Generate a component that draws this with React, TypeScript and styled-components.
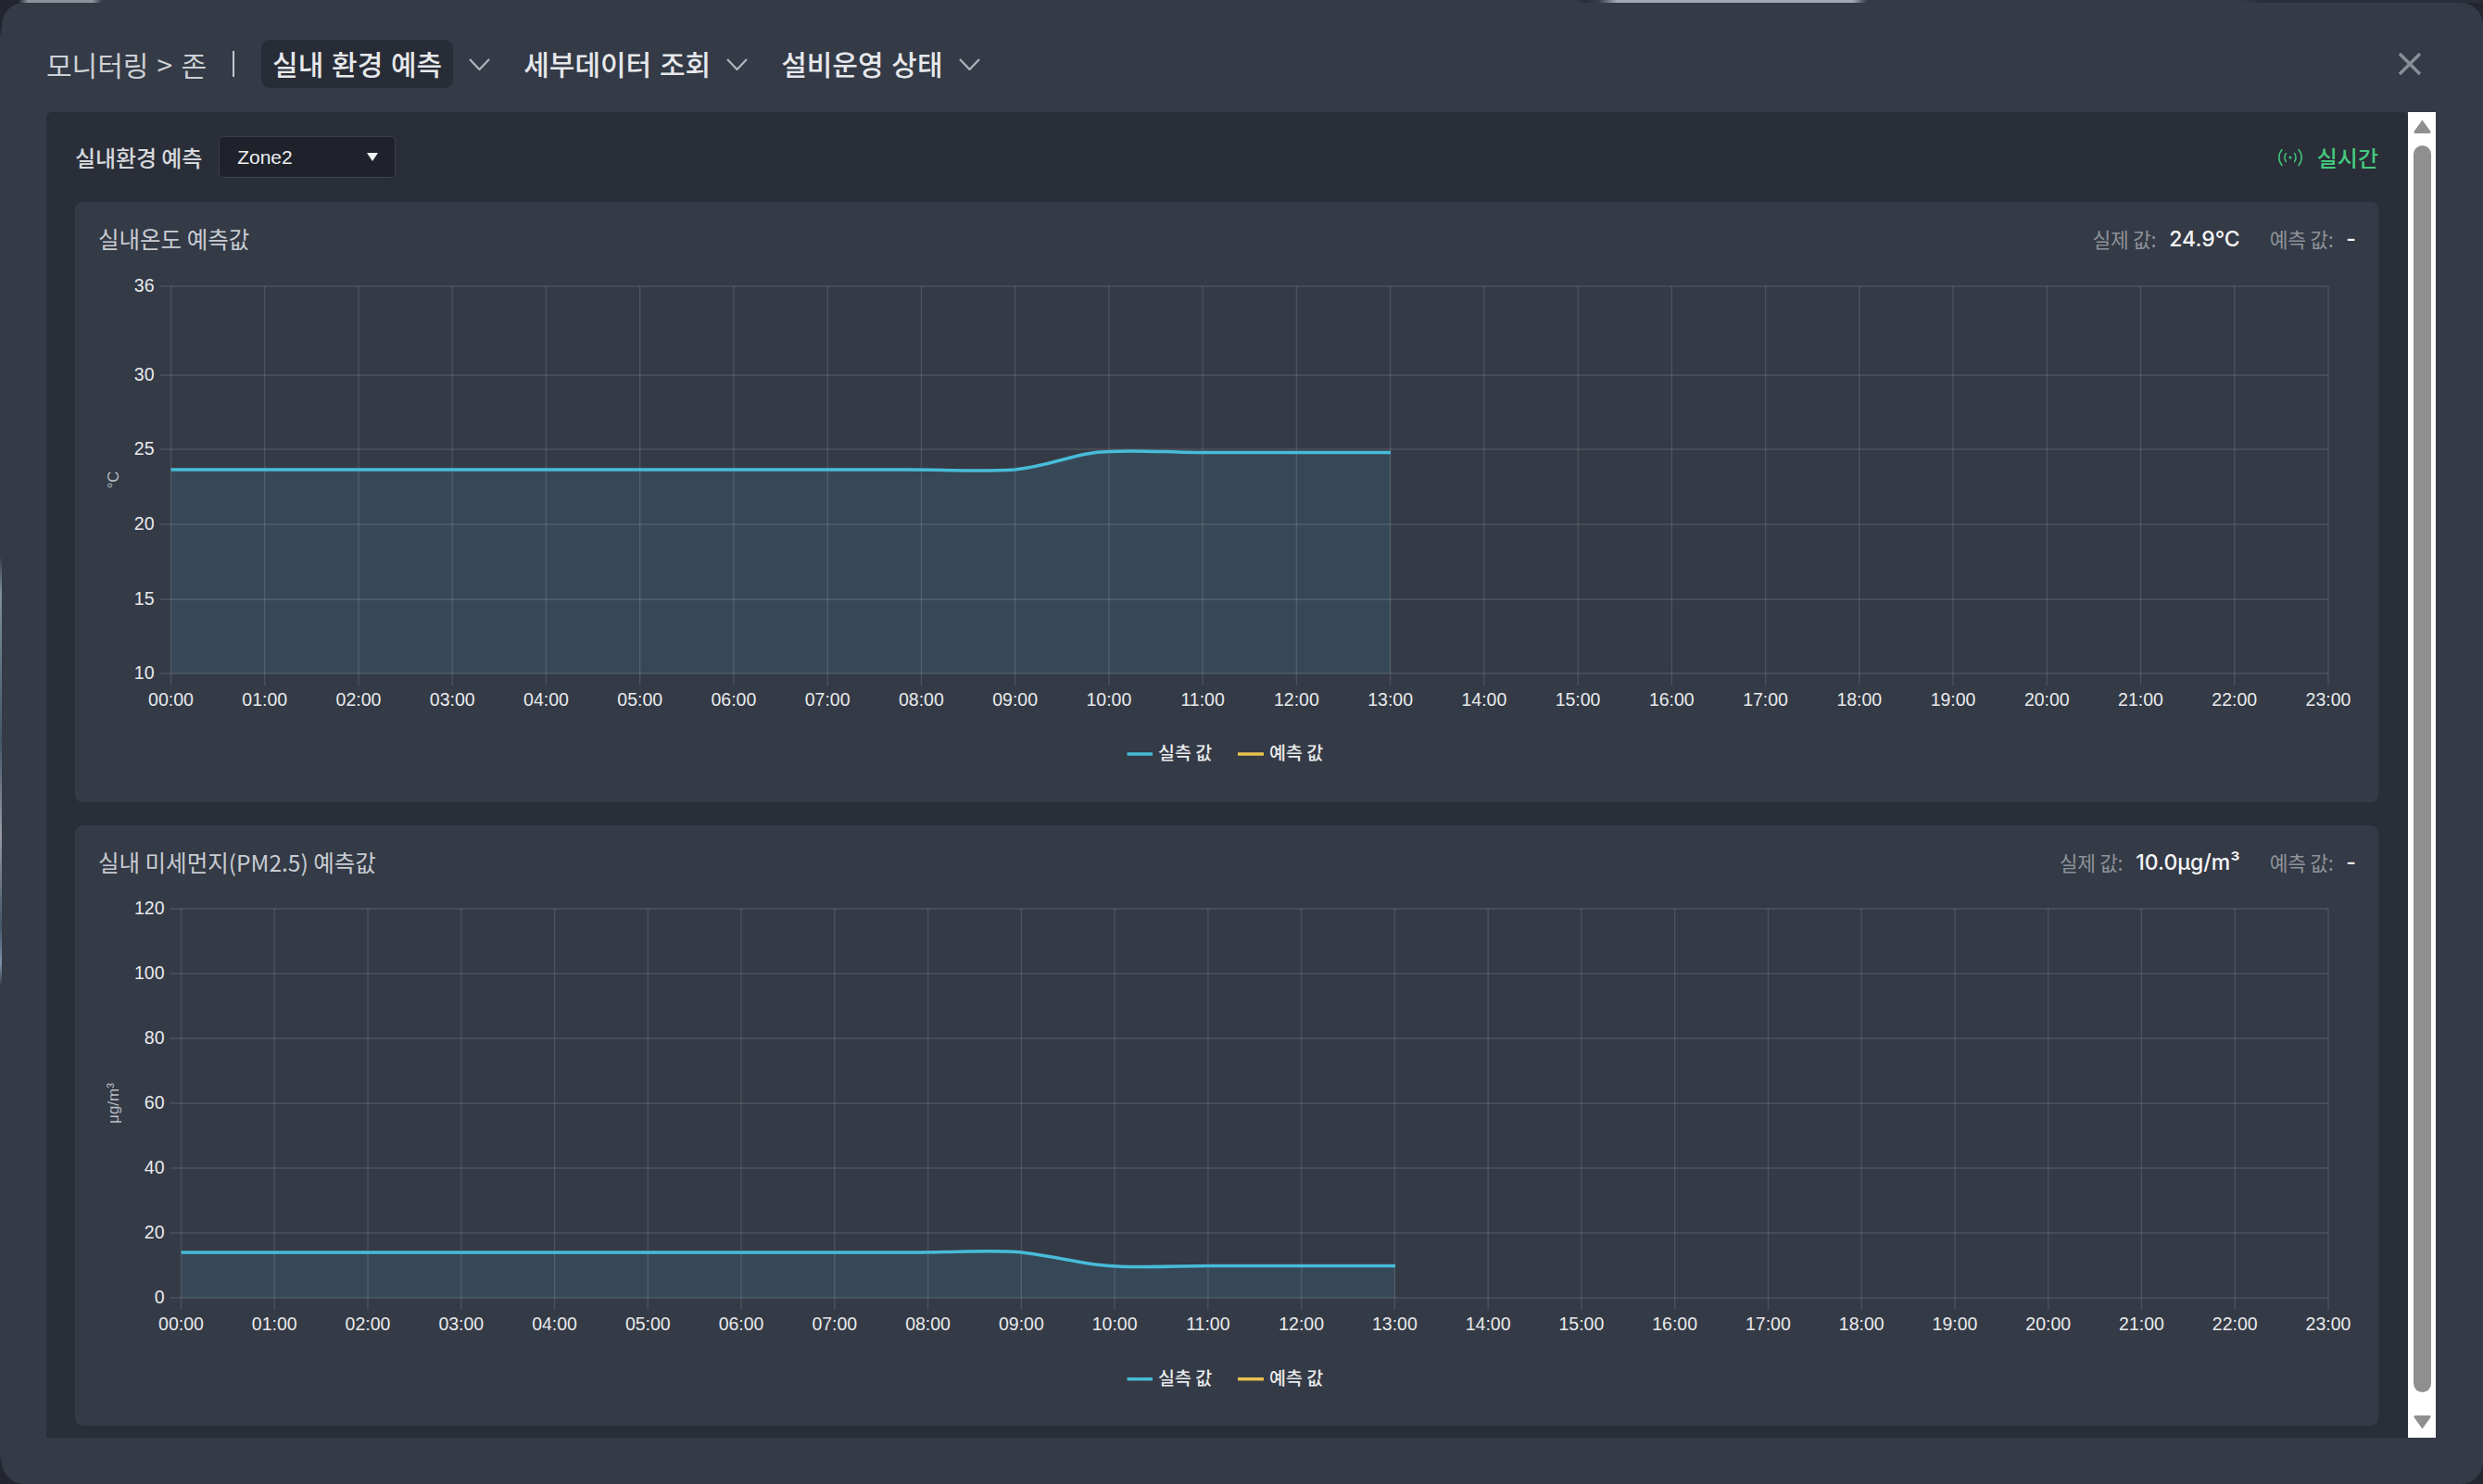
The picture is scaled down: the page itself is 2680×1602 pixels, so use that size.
import React, {FC} from 'react';
import styled, {createGlobalStyle} from 'styled-components';

const GlobalStyle = createGlobalStyle`
	html, body {
		margin: 0;
		padding: 0;
		background: #23262e;
	}
	* {
		box-sizing: border-box;
	}
`;

const FONT = `"Noto Sans CJK KR", "Liberation Sans", sans-serif`;
const LATIN = `"Liberation Sans", "Noto Sans CJK KR", sans-serif`;

// what shows of the blurred page behind the modal: a strip along the top and one along the left edge
const Page = styled.div`
	width: 2680px;
	height: 1602px;
	padding: 3px 0 0 2px;
	overflow: hidden;
	font-family: ${FONT};
	background:
		linear-gradient(
				90deg,
				#23262e 0 20px,
				#8d919a 30px 100px,
				#343a46 110px 1700px,
				#2a2e38 1710px,
				#343a46 1725px,
				#a4a8b2 1745px 2000px,
				#343a46 2015px 2420px,
				#2a2e38 2440px
			)
			top left / 100% 3px no-repeat,
		linear-gradient(
				180deg,
				#23262e 0 30px,
				#343a46 40px 600px,
				#7f909a 640px,
				#44576a 800px,
				#9a9aa2 900px,
				#44576a 1000px,
				#7d93a8 1040px,
				#343a46 1065px 1570px,
				#23262e 1580px
			)
			top left / 2px 100% no-repeat,
		#23262e;
`;

const Modal = styled.div`
	height: 1599px;
	background: #343a46;
	border-radius: 24px;
	padding: 0 51px 50px 48px;
	display: flex;
	flex-direction: column;
`;

const Header = styled.header`
	height: 118px;
	padding-top: 14px;
	display: flex;
	align-items: center;
`;

const Crumb = styled.span`
	font-size: 30px;
	word-spacing: 2.5px;
	color: #ccd0d5;
	white-space: nowrap;
`;

const Divider = styled.span`
	width: 2px;
	height: 28px;
	background: #c4c8ce;
	margin: 0 29px 0 28px;
`;

const Tab = styled.span<{$active?: boolean}>`
	font-size: 30px;
	font-weight: 500;
	word-spacing: 2px;
	color: #e6e8eb;
	height: 52px;
	line-height: 50px;
	padding: 0 ${({$active}) => ($active ? '12px' : '0')};
	border-radius: 9px;
	white-space: nowrap;
	background: ${({$active}) => ($active ? '#282c36' : 'transparent')};
`;

const Chevron = styled.svg`
	width: 23px;
	height: 13px;
	margin: 1px 36px 0 17px;
	fill: none;
	stroke: #b0b4bb;
	stroke-width: 2.2;
`;

const CloseButton = styled.svg`
	width: 26px;
	height: 26px;
	margin-left: auto;
	margin-right: 15px;
	fill: none;
	stroke: #8b8e96;
	stroke-width: 3.4;
`;

const Body = styled.div`
	flex: 1;
	display: flex;
	min-height: 0;
`;

const Panel = styled.main`
	flex: 1;
	background: #2a2e38;
	border-radius: 6px 6px 0 0;
	padding: 0 32px 13px 31px;
	display: flex;
	flex-direction: column;
`;

const PanelBar = styled.div`
	height: 97px;
	display: flex;
	align-items: center;
`;

const PanelTitle = styled.span`
	font-size: 24px;
	font-weight: 500;
	color: #d5d8dc;
	letter-spacing: -0.1px;
	margin-right: 18px;
`;

const Select = styled.div`
	width: 191px;
	height: 45px;
	background: #1f222b;
	border: 1px solid #3b404b;
	border-radius: 5px;
	display: flex;
	align-items: center;
	justify-content: space-between;
	padding: 0 18px 0 19px;
	font-family: ${LATIN};
	font-size: 21px;
	color: #eceef0;
`;

const SelectArrow = styled.i`
	width: 0;
	height: 0;
	border-left: 6px solid transparent;
	border-right: 6px solid transparent;
	border-top: 9px solid #f2f3f4;
`;

const Live = styled.div`
	margin-left: auto;
	display: flex;
	align-items: center;
	gap: 15px;
	font-size: 24px;
	font-weight: 500;
	color: #45c97f;
`;

const LiveIcon = styled.svg`
	width: 28px;
	height: 20px;
	fill: none;
	stroke: #3fbf77;
	stroke-width: 1.6;
	stroke-linecap: round;
`;

const Cards = styled.div`
	flex: 1;
	display: flex;
	flex-direction: column;
	gap: 25px;
`;

const Card = styled.section`
	height: 648px;
	background: #343a46;
	border-radius: 8px;
	display: flex;
	flex-direction: column;
`;

const CardHeader = styled.div`
	height: 76px;
	padding: 3px 24px 0 25px;
	display: flex;
	align-items: center;
	justify-content: space-between;
`;

const CardTitle = styled.h2`
	margin: 0;
	font-size: 24.5px;
	font-weight: 400;
	color: #c8ccd2;
`;

const Readout = styled.div`
	display: flex;
	align-items: center;
`;

const ReadLabel = styled.span`
	font-size: 21.5px;
	color: #8e9299;
	letter-spacing: -0.3px;
	margin-right: 14px;
`;

const ReadValue = styled.span`
	font-family: "Inter", ${LATIN};
	font-size: 23px;
	font-weight: 500;
	color: #f4f5f6;
	margin-right: 32px;
	&:last-child {
		margin-right: 0;
	}
`;

const ChartSvg = styled.svg`
	display: block;
	width: 2486px;
	height: 572px;
`;

const Scrollbar = styled.aside`
	width: 30px;
	background: #ffffff;
	display: flex;
	flex-direction: column;
	align-items: flex-start;
	padding: 8px 0 9px 6px;
`;

const ScrollArrow = styled.svg`
	width: 19px;
	height: 15px;
	fill: #8f8f8f;
	flex: none;
`;

const ScrollThumb = styled.div`
	width: 19px;
	flex: 1;
	margin: 13px 0 25px;
	background: #8f8f8f;
	border-radius: 10px;
`;

const HOURS = Array.from({length: 24}, (_, i) => `${String(i).padStart(2, '0')}:00`);
const GRID = 'rgba(255, 255, 255, 0.12)';

interface ChartProps {
	// every coordinate below is inside the card's svg (card left = 0, svg top = 0)
	left: number;
	right: number;
	yTicks: {label: string; y: number}[];
	bottom: number;
	tickEnd: number;
	labelY: number;
	linePath: string;
	endX: number;
	unit: string;
	unitX: number;
	unitY: number;
	legendY: number;
}

const Chart: FC<ChartProps> = ({left, right, yTicks, bottom, tickEnd, labelY, linePath, endX, unit, unitX, unitY, legendY}) => {
	const step = (right - left) / 23;
	const tickStart = left - 12;
	return (
		<ChartSvg viewBox="0 0 2486 572">
			<path d={`${linePath} L ${endX} ${bottom} L ${left} ${bottom} Z`} fill="#4ab8d4" fillOpacity="0.12" />
			{yTicks.map(t => (
				<g key={t.label}>
					<line x1={tickStart} x2={right} y1={t.y} y2={t.y} stroke={GRID} strokeWidth="1.4" />
					<text x={tickStart - 6} y={t.y + 6} textAnchor="end" fill="#e8eaec" fontFamily={LATIN} fontSize="19.5">
						{t.label}
					</text>
				</g>
			))}
			{HOURS.map((h, i) => (
				<g key={h}>
					<line x1={left + i * step} x2={left + i * step} y1={yTicks[0].y} y2={tickEnd} stroke={GRID} strokeWidth="1.4" />
					<text x={left + i * step} y={labelY} textAnchor="middle" fill="#e8eaec" fontFamily={LATIN} fontSize="19.5">
						{h}
					</text>
				</g>
			))}
			<path d={linePath} fill="none" stroke="#47bcd8" strokeWidth="3.5" />
			<text
				transform={`translate(${unitX} ${unitY}) rotate(-90)`}
				textAnchor="middle"
				fill="#b8bcc2"
				fontFamily={LATIN}
				fontSize="17"
			>
				{unit}
			</text>
			<line x1="1135.5" x2="1163" y1={legendY} y2={legendY} stroke="#47bcd8" strokeWidth="3.5" />
			<text x="1169" y={legendY + 6} fill="#e8eaec" fontFamily={FONT} fontWeight="500" fontSize="19.5">
				실측 값
			</text>
			<line x1="1255" x2="1283" y1={legendY} y2={legendY} stroke="#e8c24f" strokeWidth="3.5" />
			<text x="1289" y={legendY + 6} fill="#e8eaec" fontFamily={FONT} fontWeight="500" fontSize="19.5">
				예측 값
			</text>
		</ChartSvg>
	);
};

const TEMP_TOP = 294;
const toTemp = (y: number) => y - TEMP_TOP;
const tempLine = [
	`M 103.5 ${toTemp(507)}`,
	`L 900 ${toTemp(507)}`,
	`C 950 ${toTemp(507)}, 975 ${toTemp(509.5)}, 1014 ${toTemp(507)}`,
	`C 1055 ${toTemp(503)}, 1080 ${toTemp(488)}, 1116 ${toTemp(487.5)}`,
	`C 1150 ${toTemp(485.5)}, 1180 ${toTemp(488.5)}, 1217 ${toTemp(488.5)}`,
	`L 1420 ${toTemp(488.5)}`,
].join(' ');

const PM_TOP = 967;
const toPm = (y: number) => y - PM_TOP;
const pmLine = [
	`M 114.5 ${toPm(1352)}`,
	`L 910 ${toPm(1352)}`,
	`C 960 ${toPm(1351.5)}, 990 ${toPm(1349.5)}, 1020 ${toPm(1351.7)}`,
	`C 1060 ${toPm(1356)}, 1090 ${toPm(1366)}, 1121 ${toPm(1366.7)}`,
	`C 1160 ${toPm(1369)}, 1190 ${toPm(1366.5)}, 1222 ${toPm(1366.5)}`,
	`L 1425 ${toPm(1366.5)}`,
].join(' ');

const tempTicks = [
	{label: '36', y: 309},
	{label: '30', y: 405},
	{label: '25', y: 485},
	{label: '20', y: 566},
	{label: '15', y: 647},
	{label: '10', y: 727},
].map(t => ({...t, y: toTemp(t.y)}));

const pmTicks = [
	{label: '120', y: 981},
	{label: '100', y: 1051},
	{label: '80', y: 1121},
	{label: '60', y: 1191},
	{label: '40', y: 1261},
	{label: '20', y: 1331},
	{label: '0', y: 1401},
].map(t => ({...t, y: toPm(t.y)}));

const NavChevron: FC = () => (
	<Chevron viewBox="0 0 23 13">
		<path d="M1 1 L11.5 12 L22 1" />
	</Chevron>
);

const App: FC = () => (
	<Page>
		<GlobalStyle />
		<Modal>
			<Header>
				<Crumb>모니터링 &gt; 존</Crumb>
				<Divider />
				<Tab $active>실내 환경 예측</Tab>
				<NavChevron />
				<Tab>세부데이터 조회</Tab>
				<NavChevron />
				<Tab>설비운영 상태</Tab>
				<NavChevron />
				<CloseButton viewBox="0 0 26 26">
					<path d="M2 2 L24 24 M24 2 L2 24" />
				</CloseButton>
			</Header>
			<Body>
				<Panel>
					<PanelBar>
						<PanelTitle>실내환경 예측</PanelTitle>
						<Select>
							Zone2
							<SelectArrow />
						</Select>
						<Live>
							<LiveIcon viewBox="0 0 28 20">
								<circle cx="14" cy="10" r="1.6" fill="#3fbf77" stroke="none" />
								<path d="M9.5 5.5 C7.5 8 7.5 12 9.5 14.5 M18.5 5.5 C20.5 8 20.5 12 18.5 14.5" />
								<path d="M5 1.5 C0.8 6.5 0.8 13.5 5 18.5 M23 1.5 C27.2 6.5 27.2 13.5 23 18.5" />
							</LiveIcon>
							실시간
						</Live>
					</PanelBar>
					<Cards>
						<Card>
							<CardHeader>
								<CardTitle>실내온도 예측값</CardTitle>
								<Readout>
									<ReadLabel>실제 값:</ReadLabel>
									<ReadValue>24.9°C</ReadValue>
									<ReadLabel>예측 값:</ReadLabel>
									<ReadValue>-</ReadValue>
								</Readout>
							</CardHeader>
							<Chart
								left={103.5}
								right={2432}
								yTicks={tempTicks}
								bottom={toTemp(727)}
								tickEnd={toTemp(740)}
								labelY={toTemp(762)}
								linePath={tempLine}
								endX={1420}
								unit="°C"
								unitX={47}
								unitY={toTemp(518)}
								legendY={toTemp(814)}
							/>
						</Card>
						<Card>
							<CardHeader>
								<CardTitle>실내 미세먼지(PM2.5) 예측값</CardTitle>
								<Readout>
									<ReadLabel>실제 값:</ReadLabel>
									<ReadValue>10.0μg/m³</ReadValue>
									<ReadLabel>예측 값:</ReadLabel>
									<ReadValue>-</ReadValue>
								</Readout>
							</CardHeader>
							<Chart
								left={114.5}
								right={2432}
								yTicks={pmTicks}
								bottom={toPm(1401)}
								tickEnd={toPm(1414)}
								labelY={toPm(1436)}
								linePath={pmLine}
								endX={1425}
								unit="μg/m³"
								unitX={47}
								unitY={toPm(1191)}
								legendY={toPm(1488.7)}
							/>
						</Card>
					</Cards>
				</Panel>
				<Scrollbar>
					<ScrollArrow viewBox="0 0 19 15">
						<path d="M9.5 0.5 L18.5 13 Q19 15 17 15 L2 15 Q0 15 0.5 13 Z" />
					</ScrollArrow>
					<ScrollThumb />
					<ScrollArrow viewBox="0 0 19 15">
						<path d="M9.5 14.5 L18.5 2 Q19 0 17 0 L2 0 Q0 0 0.5 2 Z" />
					</ScrollArrow>
				</Scrollbar>
			</Body>
		</Modal>
	</Page>
);

export default App;
